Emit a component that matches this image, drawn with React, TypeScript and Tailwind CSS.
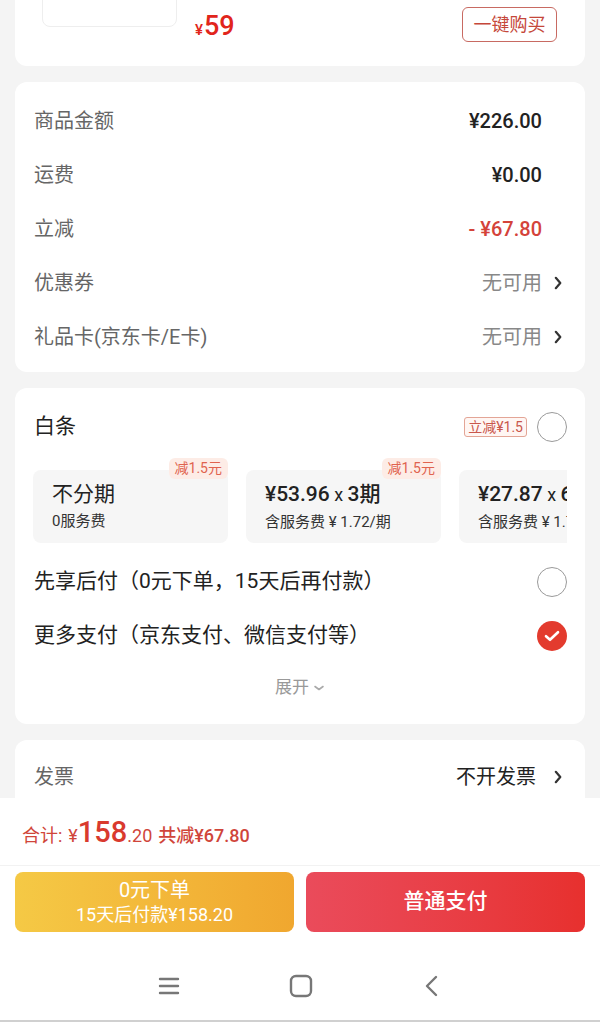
import React from "react";

const Chevron = () => (
  <svg width="8" height="14" viewBox="0 0 8 14" fill="none">
    <path d="M1.8 1.8 L6.3 7 L1.8 12.2" stroke="#333" strokeWidth="2.2" strokeLinecap="round" strokeLinejoin="round" />
  </svg>
);

const Row = ({ label, value, valueClass, chevron }: { label: string; value: React.ReactNode; valueClass?: string; chevron?: boolean }) => (
  <div className="flex h-[54px] items-center justify-between">
    <span className="text-[20px] text-[#666]">{label}</span>
    <div className="flex items-center">
      <span className={valueClass}>{value}</span>
      <span className="flex w-[20px] justify-end">{chevron ? <Chevron /> : null}</span>
    </div>
  </div>
);

const EmptyCircle = () => <div className="h-[30px] w-[30px] rounded-full border border-[#9a9a9a]" />;

const CheckCircle = () => (
  <div className="flex h-[30px] w-[30px] items-center justify-center rounded-full bg-[#e33b2e]">
    <svg width="16" height="12" viewBox="0 0 16 12" fill="none">
      <path d="M2 6.2 L6 9.8 L14 2.2" stroke="#fff" strokeWidth="2.6" strokeLinecap="round" strokeLinejoin="round" />
    </svg>
  </div>
);

const Plan = ({ title, sub, tag }: { title: React.ReactNode; sub: string; tag?: boolean }) => (
  <div className="relative h-[73px] w-[195px] shrink-0 rounded-lg bg-[#f6f6f6] pl-[19px] pt-[10px]">
    {tag ? (
      <div className="absolute right-0 top-[-12px] flex h-[21px] items-center rounded-md bg-[#fdece6] px-[6px] text-[14px] text-[#e0634f]">
        减1.5元
      </div>
    ) : null}
    <div className="whitespace-nowrap text-[21px] leading-[28px] text-[#222]">{title}</div>
    <div className="mt-[3px] whitespace-nowrap text-[15px] leading-[20px] text-[#333]">{sub}</div>
  </div>
);

export default function App() {
  return (
    <div
      className="flex h-[1022px] w-full flex-col overflow-hidden bg-[#f4f4f4]"
      style={{ fontFamily: 'Roboto, "Noto Sans CJK SC", sans-serif' }}
    >
      <div className="h-[798px] shrink-0 overflow-hidden">
        {/* Top product card (scrolled) */}
        <div className="mx-[15px] mt-[-100px] h-[166px] rounded-xl bg-white pt-[27px]">
          <div className="flex items-start">
            <div className="ml-[27px] h-[100px] w-[135px] rounded-lg border border-[#eeeeee]" />
            <div className="ml-[18px] mt-[82px] flex items-baseline text-[#e1251b]">
              <span className="text-[15px] font-medium">¥</span>
              <span className="ml-[1px] text-[27px] font-medium leading-[34px]">59</span>
            </div>
            <div className="ml-auto mr-[28px] mt-[80px] flex h-[35px] w-[95px] items-center justify-center rounded-md border border-[#c86a62] text-[18px] text-[#c5473a]">
              一键购买
            </div>
          </div>
        </div>

        {/* Price summary */}
        <div className="mx-[15px] mt-[16px] rounded-xl bg-white pb-[8px] pl-[19px] pr-[23px] pt-[12px]">
          <Row label="商品金额" value="¥226.00" valueClass="text-[20px] font-medium text-[#222]" />
          <Row label="运费" value="¥0.00" valueClass="text-[20px] font-medium text-[#222]" />
          <Row label="立减" value="- ¥67.80" valueClass="text-[20px] font-medium text-[#d4433a]" />
          <Row label="优惠券" value="无可用" valueClass="text-[20px] text-[#888]" chevron />
          <Row label="礼品卡(京东卡/E卡)" value="无可用" valueClass="text-[20px] text-[#888]" chevron />
        </div>

        {/* Payment */}
        <div className="mx-[15px] mt-[16px] rounded-xl bg-white pb-[11px] pt-[14px]">
          <div className="flex h-[50px] items-center justify-between pl-[19px] pr-[18px]">
            <span className="text-[21px] text-[#222]">白条</span>
            <div className="flex items-center gap-[10px]">
              <span className="flex h-[20px] items-center rounded-[3px] border border-[#e3a596] bg-[#fff6f3] px-[3px] text-[14px] text-[#c9574c]">
                立减¥1.5
              </span>
              <EmptyCircle />
            </div>
          </div>
          <div className="mx-[18px] mt-[6px] flex gap-[18px] overflow-hidden pt-[12px]">
            <Plan title="不分期" sub="0服务费" tag />
            <Plan
              title={
                <span>
                  <span className="font-medium">¥53.96</span>
                  <span className="text-[18px]"> x </span>
                  <span className="font-medium">3期</span>
                </span>
              }
              sub="含服务费 ¥ 1.72/期"
              tag
            />
            <Plan
              title={
                <span>
                  <span className="font-medium">¥27.87</span>
                  <span className="text-[18px]"> x </span>
                  <span className="font-medium">6期</span>
                </span>
              }
              sub="含服务费 ¥ 1.72/期"
            />
          </div>
          <div className="mt-[12px] flex h-[54px] items-center justify-between pl-[19px] pr-[18px]">
            <span className="text-[21px] text-[#222]">先享后付（0元下单，15天后再付款）</span>
            <EmptyCircle />
          </div>
          <div className="flex h-[54px] items-center justify-between pl-[19px] pr-[18px]">
            <span className="text-[21px] text-[#222]">更多支付（京东支付、微信支付等）</span>
            <CheckCircle />
          </div>
          <div className="flex h-[50px] items-center justify-center gap-[4px] text-[17px] text-[#999]">
            <span>展开</span>
            <svg width="12" height="8" viewBox="0 0 12 8" fill="none">
              <path d="M2 2.5 L6 5.5 L10 2.5" stroke="#aaa" strokeWidth="1.6" strokeLinecap="round" strokeLinejoin="round" />
            </svg>
          </div>
        </div>

        {/* Invoice */}
        <div className="mx-[15px] mt-[16px] h-[120px] rounded-xl bg-white pl-[19px] pr-[23px] pt-[10px]">
          <div className="flex h-[54px] items-center justify-between">
            <span className="text-[20px] text-[#666]">发票</span>
            <div className="flex items-center">
              <span className="text-[20px] text-[#222]">不开发票</span>
              <span className="flex w-[26px] justify-end">
                <Chevron />
              </span>
            </div>
          </div>
        </div>
      </div>

      {/* Footer */}
      <div className="flex flex-1 flex-col bg-white">
        <div className="flex h-[68px] items-center border-b border-[#f2f2f2] pl-[22px] text-[#d0453a]">
          <span className="flex items-baseline">
            <span className="text-[18px]">合计:</span>
            <span className="ml-[6px] text-[18px]">¥</span>
            <span className="text-[29px] font-medium leading-[34px] text-[#d93a2e]">158</span>
            <span className="text-[18px]">.20</span>
            <span className="ml-[6px] text-[18px] font-medium">共减¥67.80</span>
          </span>
        </div>
        <div className="mx-[15px] mt-[6px] flex h-[60px] gap-[12px]">
          <div className="flex flex-1 flex-col items-center justify-center rounded-lg bg-gradient-to-r from-[#f5c945] to-[#f0a72f] text-white">
            <span className="text-[20px] leading-[25px]">0元下单</span>
            <span className="text-[18px] leading-[23px]">15天后付款¥158.20</span>
          </div>
          <div className="flex flex-1 items-center justify-center rounded-lg bg-gradient-to-r from-[#ea4b5b] to-[#e7302e] text-[21px] font-medium text-white">
            普通支付
          </div>
        </div>
        <div className="flex flex-1 items-start justify-center border-b-2 border-[#d0d0d0] pt-[42px]">
          <div className="flex w-[300px] items-center justify-between px-[8px]">
            <svg width="22" height="22" viewBox="0 0 22 22" fill="none">
              <path d="M2 4 H20 M2 11 H20 M2 18 H20" stroke="#777" strokeWidth="2.4" strokeLinecap="round" />
            </svg>
            <svg width="24" height="24" viewBox="0 0 24 24" fill="none">
              <rect x="2" y="2" width="20" height="20" rx="5" stroke="#777" strokeWidth="2.4" />
            </svg>
            <svg width="20" height="24" viewBox="0 0 20 24" fill="none">
              <path d="M14 3 L5 12 L14 21" stroke="#777" strokeWidth="2.4" strokeLinecap="round" strokeLinejoin="round" />
            </svg>
          </div>
        </div>
      </div>
    </div>
  );
}
